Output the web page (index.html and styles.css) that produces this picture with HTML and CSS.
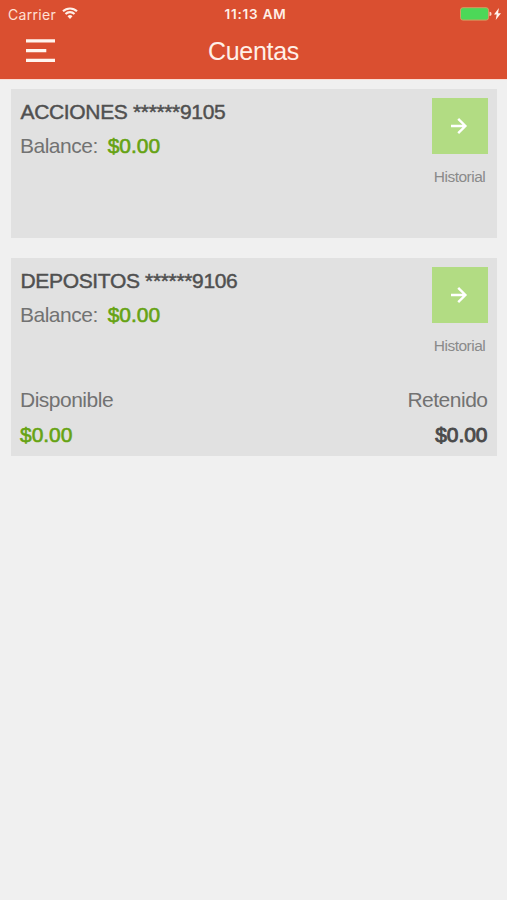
FILE: index.html
```html
<!DOCTYPE html>
<html lang="es">
<head>
<meta charset="utf-8">
<title>Cuentas</title>
<link rel="stylesheet" href="styles.css">
</head>
<body>
<header class="header">
  <div class="status">
    <div class="carrier"><span>Carrier</span>
      <svg class="wifi" width="16" height="12" viewBox="0 0 16 12" fill="none" stroke="#fff0e8" stroke-width="2.1"><path d="M1 4.3a10 10 0 0 1 14 0M3.5 7a6.4 6.4 0 0 1 9 0"/><path d="M8 11.9 5.5 9.2a3.6 3.6 0 0 1 5 0z" fill="#fff0e8" stroke="none"/></svg>
    </div>
    <div class="time">11:13 AM</div>
    <svg class="battery" width="42" height="14" viewBox="0 0 42 14"><rect x=".5" y=".7" width="28" height="12.4" rx="2.4" fill="#4cd858" stroke="#d69c62"/><path d="M29.5 4.8a2.1 2.1 0 0 1 0 4.2z" fill="#ffd5c5"/><path d="M38.9 1 34 7.6h2.7l-1 5.4 5.3-6.8h-2.9z" fill="#fff5ee"/></svg>
  </div>
  <div class="navbar">
    <svg class="menu" width="30" height="24" viewBox="0 0 30 24" fill="#fff5ee"><path d="M0 .3h29v3.1H0zM0 10.1h20.3v3.1H0zM0 19.8h29v3.1H0z"/></svg>
    <h1 class="title">Cuentas</h1>
  </div>
</header>
<main class="accounts">
  <section class="card">
    <div class="summary">
      <div>
        <h2 class="name">ACCIONES ******9105</h2>
        <div class="balance"><span class="label">Balance:</span><span class="amount green">$0.00</span></div>
      </div>
      <div class="history">
        <div class="arrow"><svg width="18" height="18" viewBox="0 0 18 18" fill="none" stroke="#fff" stroke-width="2.4"><path d="M1 9h14.4M8.2 1.8 15.4 9l-7.2 7.2"/></svg></div>
        <span class="history-label">Historial</span>
      </div>
    </div>
  </section>
  <section class="card detailed">
    <div class="summary">
      <div>
        <h2 class="name">DEPOSITOS ******9106</h2>
        <div class="balance"><span class="label">Balance:</span><span class="amount green">$0.00</span></div>
      </div>
      <div class="history">
        <div class="arrow"><svg width="18" height="18" viewBox="0 0 18 18" fill="none" stroke="#fff" stroke-width="2.4"><path d="M1 9h14.4M8.2 1.8 15.4 9l-7.2 7.2"/></svg></div>
        <span class="history-label">Historial</span>
      </div>
    </div>
    <div class="totals">
      <div><div class="label">Disponible</div><div class="amount green">$0.00</div></div>
      <div class="held"><div class="label">Retenido</div><div class="amount dark">$0.00</div></div>
    </div>
  </section>
</main>
</body>
</html>
```
FILE: styles.css
```css
* { box-sizing: border-box; }
body {
  margin: 0;
  min-height: 900px;
  background: #f0f0f0;
  font-family: "Liberation Sans", Arial, sans-serif;
  color: #505050;
}
h1, h2 { margin: 0; font-weight: 400; }
svg { display: block; }
.header { height: 79px; background: #da4f30; box-shadow: 0 1px 0 #f9ddd4; color: #fff0e8; }
.status {
  height: 27px;
  padding: 0 5px 0 8px;
  display: grid;
  grid-template-columns: 1fr auto 1fr;
  align-items: center;
  font: 14px/27px Inter, sans-serif;
}
.carrier { display: flex; align-items: center; gap: 6px; letter-spacing: .3px; color: #ffe0d5; }
.wifi { margin-top: -2px; }
.time { padding-left: 1px; font-weight: 600; font-size: 13.5px; letter-spacing: .8px; line-height: 28px; }
.battery { justify-self: end; }
.navbar {
  height: 52px;
  padding: 0 26px;
  display: grid;
  grid-template-columns: 1fr auto 1fr;
}
.menu { margin-top: 12px; }
.title { font-size: 25px; line-height: 49px; letter-spacing: -.3px; }
.accounts { padding: 10px 10px 0 11px; display: grid; gap: 20px; }
.card { height: 149px; padding: 9px 9px 0; background: #e1e1e1; }
.detailed { height: 198px; }
.summary { height: 116px; display: flex; justify-content: space-between; }
.name {
  padding-left: .5px;
  font-size: 21px;
  line-height: 28px;
  letter-spacing: -.34px;
  -webkit-text-stroke: .45px;
}
.balance { margin-top: 6px; line-height: 28px; display: flex; gap: 10px; }
.label { font-size: 21px; letter-spacing: -.5px; color: #727272; }
.amount { font-size: 21px; letter-spacing: -.05px; -webkit-text-stroke: .6px; }
.green { color: #66a313; }
.dark { color: #4b4b4b; -webkit-text-stroke-width: .9px; }
.history { width: 56px; text-align: center; }
.arrow {
  height: 56px;
  display: flex;
  align-items: center;
  justify-content: center;
  padding-right: 2px;
  background: #b2dc83;
}
.history-label { display: block; margin-top: 13px; padding-right: 1px; font-size: 15.5px; line-height: 20px; letter-spacing: -.5px; color: #8a8a8a; }
.totals { padding-top: 3px; display: flex; justify-content: space-between; line-height: 28px; }
.totals .amount { margin-top: 7px; }
.held { padding-right: .5px; text-align: right; }
```
